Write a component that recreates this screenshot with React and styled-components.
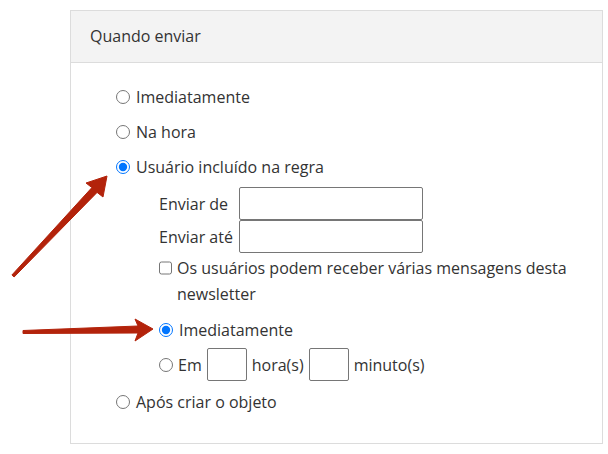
import styled, { createGlobalStyle } from "styled-components";

const Global = createGlobalStyle`
  body {
    margin: 0;
    background: #fff;
    font-family: "Open Sans", Lato, sans-serif;
    color: #333;
  }
`;

const Page = styled.div`
  position: relative;
  width: 608px;
  height: 454px;
  padding: 10px 0 0 70px;
  box-sizing: border-box;
`;

const Panel = styled.section`
  width: 533px;
  height: 434px;
  box-sizing: border-box;
  border: 1px solid #dcdcdc;
`;

const PanelHeader = styled.header`
  height: 52px;
  box-sizing: border-box;
  display: flex;
  align-items: center;
  padding: 0 0 1px 19px;
  background: #f3f3f3;
  border-bottom: 1px solid #dcdcdc;
  font-size: 16px;
  color: #333;
`;

const PanelBody = styled.div`
  padding: 16px 0 0 45px;
  font-size: 16px;
`;

const Option = styled.label`
  display: flex;
  align-items: center;
  height: 35px;
  gap: ${(p) => p.$gap || 6}px;
`;

const Radio = styled.input.attrs({ type: "radio" })`
  width: 14px;
  height: 14px;
  margin: 0;
`;

const Check = styled.input.attrs({ type: "checkbox" })`
  width: 14px;
  height: 14px;
  margin: 0 5px 0 0;
  align-self: flex-start;
  margin-top: 6px;
`;

const SubGroup = styled.div`
  padding: 3px 0 0 43px;
`;

const FieldRow = styled.div`
  display: flex;
  align-items: center;
  height: 33px;
`;

const FieldLabel = styled.span`
  width: 80px;
`;

const TextBox = styled.input`
  width: ${(p) => p.$w}px;
  height: 33px;
  box-sizing: border-box;
  border: 1px solid #767676;
  border-radius: 2px;
  margin: 0;
`;

const CheckLine = styled.label`
  display: flex;
  padding-top: 2px;
  line-height: 26px;
  width: 430px;
`;

const NestedGroup = styled.div`
  padding-top: 5px;
`;

const LastOption = styled(Option)`
  margin-top: 2px;
`;

const Arrows = styled.svg`
  position: absolute;
  left: 0;
  top: 0;
  pointer-events: none;
`;

export default function App() {
  return (
    <Page>
      <Global />
      <Panel>
        <PanelHeader>Quando enviar</PanelHeader>
        <PanelBody>
          <Option><Radio name="when" />Imediatamente</Option>
          <Option><Radio name="when" />Na hora</Option>
          <Option><Radio name="when" defaultChecked />Usuário incluído na regra</Option>
          <SubGroup>
            <FieldRow>
              <FieldLabel>Enviar de</FieldLabel>
              <TextBox $w={184} />
            </FieldRow>
            <FieldRow>
              <FieldLabel>Enviar até</FieldLabel>
              <TextBox $w={184} />
            </FieldRow>
            <CheckLine>
              <Check />
              <span>Os usuários podem receber várias mensagens desta newsletter</span>
            </CheckLine>
            <NestedGroup>
              <Option><Radio name="rule" defaultChecked />Imediatamente</Option>
              <Option $gap={5}>
                <Radio name="rule" />Em
                <TextBox $w={40} />
                hora(s)
                <TextBox $w={40} />
                minuto(s)
              </Option>
            </NestedGroup>
          </SubGroup>
          <LastOption><Radio name="when" />Após criar o objeto</LastOption>
        </PanelBody>
      </Panel>
      <Arrows width="608" height="454" viewBox="0 0 608 454">
        <polygon
          fill="#b3230b"
          stroke="#b3230b"
          strokeWidth="1"
          strokeLinejoin="round"
          points="11.9,275 91.9,187.6 86,183 107,176 103,197 97.1,192.4 14.1,277"
        />
        <polygon
          fill="#b3230b"
          stroke="#b3230b"
          strokeWidth="1"
          strokeLinejoin="round"
          points="23,330.5 138,326 135,319 153,329 135,341 138,333 23,333.5"
        />
      </Arrows>
    </Page>
  );
}
